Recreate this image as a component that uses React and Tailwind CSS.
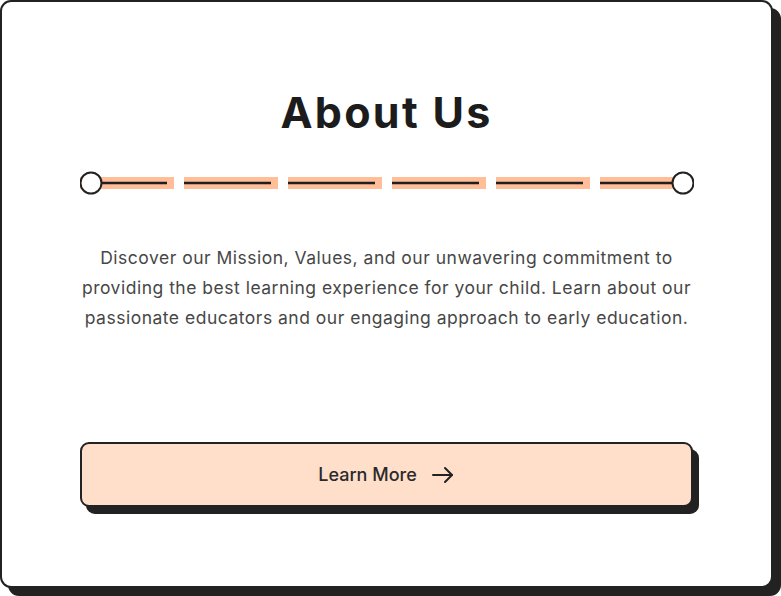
import React from "react";

const Divider = () => (
  <svg width="614" height="26" viewBox="0 0 614 26" className="block">
    <line x1="0" y1="13" x2="603" y2="13" stroke="#ffbe98" strokeWidth="12" strokeDasharray="94 10" />
    <line x1="0" y1="13" x2="603" y2="13" stroke="#1f1f1f" strokeWidth="2.5" strokeDasharray="87 17" />
    <circle cx="11" cy="13" r="10.5" fill="#fff" stroke="#222" strokeWidth="2" />
    <circle cx="603" cy="13" r="10.5" fill="#fff" stroke="#222" strokeWidth="2" />
  </svg>
);

const App = () => {
  return (
    <div className="w-[781px] h-[596px] bg-white" style={{ fontFamily: "Inter, 'Noto Sans', sans-serif" }}>
      <div className="w-[773px] h-[588px] border-2 border-[#222] rounded-[11px] bg-white shadow-[8px_8px_0_0_#222] flex flex-col items-center px-[78px]">
        <h1 className="mt-[80px] text-[43px] leading-[60px] font-bold text-[#1c1c1c] tracking-[2.3px]">About Us</h1>
        <div className="mt-[28px] self-stretch">
          <Divider />
        </div>
        <p className="mt-[47px] text-[17.5px] leading-[30px] text-[#474747] text-center whitespace-nowrap tracking-[0.5px]">
          Discover our Mission, Values, and our unwavering commitment to
          <br />
          providing the best learning experience for your child. Learn about our
          <br />
          passionate educators and our engaging approach to early education.
        </p>
        <button className="mt-[109px] w-full h-[65px] bg-[#ffdeca] border-2 border-[#222] rounded-[9px] shadow-[6px_7px_0_0_#222] flex items-center justify-center gap-[14px] text-[18px] font-medium text-[#2a2a2a]">
          <span>Learn More</span>
          <svg width="24" height="24" viewBox="0 0 24 24" fill="none" stroke="#222" strokeWidth="2" strokeLinecap="round" strokeLinejoin="round">
            <path d="M2 12h19" />
            <path d="M14 5l7 7-7 7" />
          </svg>
        </button>
      </div>
    </div>
  );
};

export default App;
